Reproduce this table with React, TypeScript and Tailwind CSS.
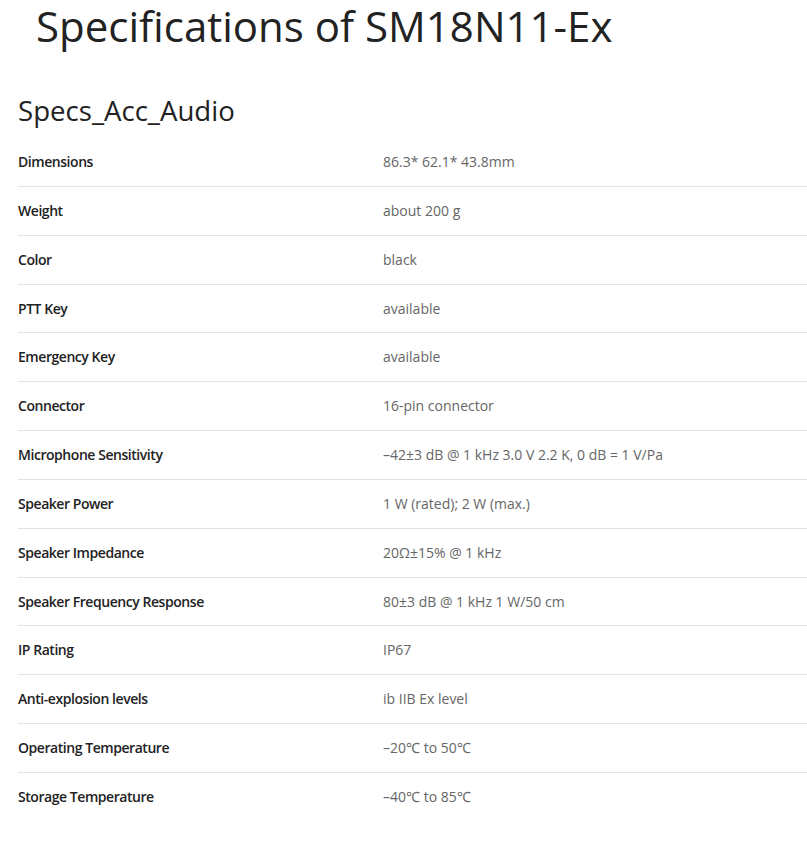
const specs: [string, string][] = [
  ['Dimensions', '86.3* 62.1* 43.8mm'],
  ['Weight', 'about 200 g'],
  ['Color', 'black'],
  ['PTT Key', 'available'],
  ['Emergency Key', 'available'],
  ['Connector', '16-pin connector'],
  ['Microphone Sensitivity', '–42±3 dB @ 1 kHz 3.0 V 2.2 K, 0 dB = 1 V/Pa'],
  ['Speaker Power', '1 W (rated); 2 W (max.)'],
  ['Speaker Impedance', '20Ω±15% @ 1 kHz'],
  ['Speaker Frequency Response', '80±3 dB @ 1 kHz 1 W/50 cm'],
  ['IP Rating', 'IP67'],
  ['Anti-explosion levels', 'ib IIB Ex level'],
  ['Operating Temperature', '–20℃ to 50℃'],
  ['Storage Temperature', '–40℃ to 85℃'],
];

export default function App() {
  return (
    <div className="min-h-[846px] bg-white font-['Open_Sans',sans-serif] text-[#222]">
      <h1 className="pl-[36px] text-[42px] leading-[51px] font-normal">Specifications of SM18N11-Ex</h1>
      <section className="pl-[18px] pt-[41px]">
        <h2 className="text-[27.6px] leading-[36px] font-normal">Specs_Acc_Audio</h2>
        <div className="mt-[10px]">
          {specs.map(([label, value], i) => (
            <div
              key={label}
              className={`grid grid-cols-[365px_1fr] py-[12px] text-[14px] leading-[23.85px] ${
                i < specs.length - 1 ? 'border-b border-[#e2e2e2]' : ''
              }`}
            >
              <div className="font-semibold tracking-[-0.45px] text-[#222]">{label}</div>
              <div className="text-[#666]">{value}</div>
            </div>
          ))}
        </div>
      </section>
    </div>
  );
}
